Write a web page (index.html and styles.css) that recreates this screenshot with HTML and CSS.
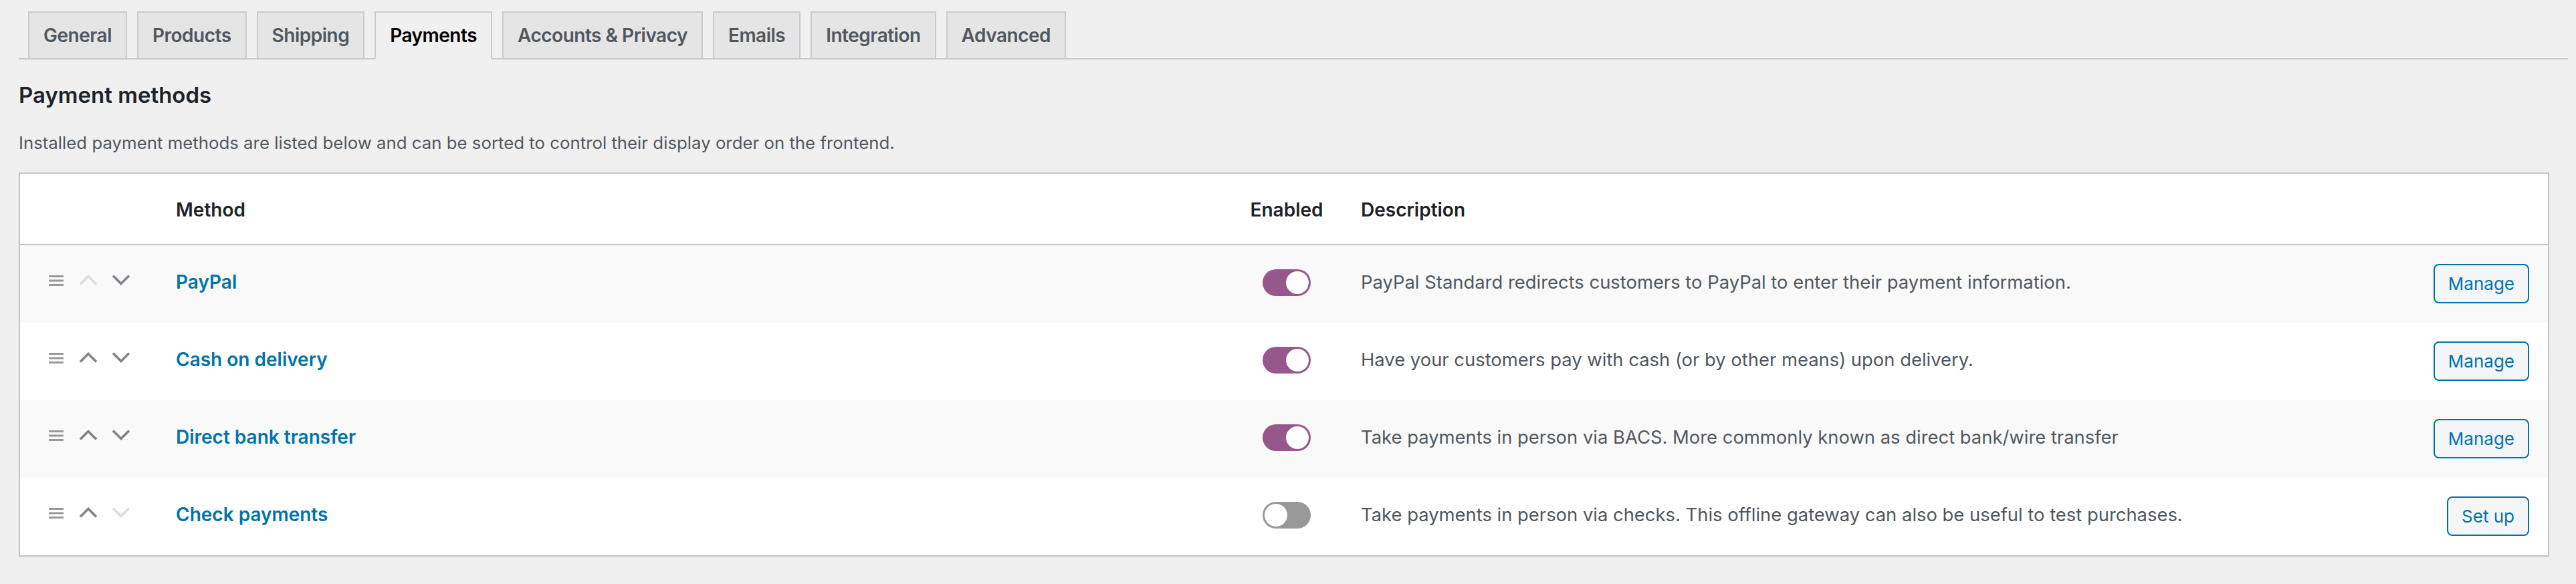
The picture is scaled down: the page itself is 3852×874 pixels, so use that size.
FILE: index.html
```html
<!DOCTYPE html>
<html lang="en">
<head>
<meta charset="utf-8">
<title>Payments settings</title>
<link rel="stylesheet" href="styles.css">
</head>
<body>
<div class="wrap">
  <nav class="nav-tabs">
    <a class="nav-tab">General</a>
    <a class="nav-tab">Products</a>
    <a class="nav-tab">Shipping</a>
    <a class="nav-tab active">Payments</a>
    <a class="nav-tab">Accounts &amp; Privacy</a>
    <a class="nav-tab">Emails</a>
    <a class="nav-tab">Integration</a>
    <a class="nav-tab">Advanced</a>
  </nav>

  <h2 class="title">Payment methods</h2>
  <p class="intro">Installed payment methods are listed below and can be sorted to control their display order on the frontend.</p>

  <div class="gateways">
    <div class="row head">
      <div class="c-sort"></div>
      <div class="c-name">Method</div>
      <div class="c-status">Enabled</div>
      <div class="c-desc">Description</div>
      <div class="c-action"></div>
    </div>

    <div class="row alt">
      <div class="c-sort">
        <svg class="drag" width="22" height="16" viewBox="0 0 22 16"><rect y="0" width="22" height="3"/><rect y="6.5" width="22" height="3"/><rect y="13" width="22" height="3"/></svg>
        <svg class="chev off" width="28" height="16" viewBox="0 0 28 16"><path d="M2 14.5 L14 2.5 L26 14.5"/></svg>
        <svg class="chev" width="28" height="16" viewBox="0 0 28 16"><path d="M2 1.5 L14 13.5 L26 1.5"/></svg>
      </div>
      <div class="c-name"><a class="method">PayPal</a></div>
      <div class="c-status"><span class="toggle on"></span></div>
      <div class="c-desc">PayPal Standard redirects customers to PayPal to enter their payment information.</div>
      <div class="c-action"><a class="btn">Manage</a></div>
    </div>

    <div class="row">
      <div class="c-sort">
        <svg class="drag" width="22" height="16" viewBox="0 0 22 16"><rect y="0" width="22" height="3"/><rect y="6.5" width="22" height="3"/><rect y="13" width="22" height="3"/></svg>
        <svg class="chev" width="28" height="16" viewBox="0 0 28 16"><path d="M2 14.5 L14 2.5 L26 14.5"/></svg>
        <svg class="chev" width="28" height="16" viewBox="0 0 28 16"><path d="M2 1.5 L14 13.5 L26 1.5"/></svg>
      </div>
      <div class="c-name"><a class="method">Cash on delivery</a></div>
      <div class="c-status"><span class="toggle on"></span></div>
      <div class="c-desc">Have your customers pay with cash (or by other means) upon delivery.</div>
      <div class="c-action"><a class="btn">Manage</a></div>
    </div>

    <div class="row alt">
      <div class="c-sort">
        <svg class="drag" width="22" height="16" viewBox="0 0 22 16"><rect y="0" width="22" height="3"/><rect y="6.5" width="22" height="3"/><rect y="13" width="22" height="3"/></svg>
        <svg class="chev" width="28" height="16" viewBox="0 0 28 16"><path d="M2 14.5 L14 2.5 L26 14.5"/></svg>
        <svg class="chev" width="28" height="16" viewBox="0 0 28 16"><path d="M2 1.5 L14 13.5 L26 1.5"/></svg>
      </div>
      <div class="c-name"><a class="method">Direct bank transfer</a></div>
      <div class="c-status"><span class="toggle on"></span></div>
      <div class="c-desc">Take payments in person via BACS. More commonly known as direct bank/wire transfer</div>
      <div class="c-action"><a class="btn">Manage</a></div>
    </div>

    <div class="row">
      <div class="c-sort">
        <svg class="drag" width="22" height="16" viewBox="0 0 22 16"><rect y="0" width="22" height="3"/><rect y="6.5" width="22" height="3"/><rect y="13" width="22" height="3"/></svg>
        <svg class="chev" width="28" height="16" viewBox="0 0 28 16"><path d="M2 14.5 L14 2.5 L26 14.5"/></svg>
        <svg class="chev off" width="28" height="16" viewBox="0 0 28 16"><path d="M2 1.5 L14 13.5 L26 1.5"/></svg>
      </div>
      <div class="c-name"><a class="method">Check payments</a></div>
      <div class="c-status"><span class="toggle off"></span></div>
      <div class="c-desc">Take payments in person via checks. This offline gateway can also be useful to test purchases.</div>
      <div class="c-action"><a class="btn">Set up</a></div>
    </div>
  </div>
</div>
</body>
</html>
```

FILE: styles.css
```css
html, body {
  margin: 0;
  padding: 0;
  background: #f0f0f1;
}

body {
  font-family: "Inter", "Noto Sans", sans-serif;
  color: #50575e;
  min-height: 874px;
}

.wrap {
  padding: 0 40px 0 28px;
}

/* Tabs */
.nav-tabs {
  display: flex;
  padding-top: 17px;
  border-bottom: 2px solid #c8c8c8;
  margin-right: -28px;
}

.nav-tab {
  display: block;
  box-sizing: border-box;
  height: 72px;
  margin: 0 0 -2px 15px;
  padding: 0 21px;
  border: 2px solid #cbcbcb;
  border-bottom-color: #c8c8c8;
  background: #e5e5e5;
  color: #50575e;
  font-size: 28px;
  font-weight: 600;
  letter-spacing: -0.5px;
  line-height: 68px;
  white-space: nowrap;
}

.nav-tab:first-child {
  margin-left: 14px;
}

.nav-tab.active {
  background: #f0f0f1;
  border-bottom-color: #f0f0f1;
  color: #000;
}

/* Heading + intro */
.title {
  margin: 33px 0 0;
  font-size: 33px;
  font-weight: 600;
  line-height: 40px;
  color: #1d2327;
}

.intro {
  margin: 34px 0 0;
  font-size: 25.8px;
  line-height: 36px;
  color: #50575e;
}

/* Gateways table */
.gateways {
  margin-top: 26px;
  border: 2px solid #c3c4c7;
  background: #fff;
  box-shadow: 0 1px 2px rgba(0, 0, 0, 0.04);
}

.row {
  display: grid;
  grid-template-columns: 233px 1608px 106px 1fr auto;
  align-items: center;
  box-sizing: border-box;
  height: 116px;
  padding-bottom: 6px;
  background: #fff;
}

.row.alt {
  background: #f9f9f9;
}

.row.head {
  height: 107px;
  padding: 2px 0 0;
  border-bottom: 2px solid #c3c4c7;
  font-size: 28px;
  font-weight: 600;
  color: #1d2327;
}

.c-sort {
  display: flex;
  align-items: center;
  padding-left: 43px;
}

.drag {
  fill: #999;
  margin-top: -4px;
}

.chev {
  fill: none;
  stroke: #80848a;
  stroke-width: 3.6;
  margin-top: -6px;
}

.chev.off {
  stroke: #dcdcde;
}

.drag + .chev {
  margin-left: 23px;
}

.chev + .chev {
  margin-left: 21px;
}

.c-status {
  display: flex;
  justify-content: center;
  text-align: center;
  white-space: nowrap;
}

.c-desc {
  padding-left: 58px;
  font-size: 27.4px;
  white-space: nowrap;
}

.head .c-desc {
  font-size: 28px;
  color: #1d2327;
}

.c-action {
  display: flex;
  justify-content: flex-end;
  padding-right: 28px;
}

.method {
  color: #0073aa;
  font-size: 28px;
  font-weight: 600;
  text-decoration: none;
}

/* Toggle */
.toggle {
  display: flex;
  box-sizing: border-box;
  width: 72px;
  height: 40px;
  padding: 3px;
  border-radius: 20px;
  margin-top: 2px;
}

.toggle::after {
  content: "";
  width: 34px;
  height: 34px;
  border-radius: 50%;
  background: #fff;
}

.toggle.on {
  background: #96588a;
  justify-content: flex-end;
}

.toggle.off {
  background: #999;
  justify-content: flex-start;
}

/* Buttons */
.btn {
  display: block;
  box-sizing: border-box;
  height: 59px;
  padding: 0 20px;
  margin-top: 4px;
  border: 2px solid #0073aa;
  border-radius: 8px;
  background: #f3f5f6;
  color: #0073aa;
  font-size: 26px;
  line-height: 55px;
  white-space: nowrap;
}
```
